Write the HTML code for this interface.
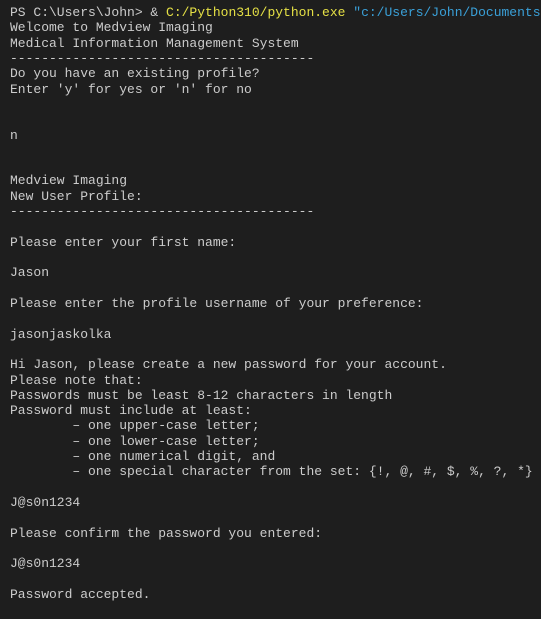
<!DOCTYPE html>
<html><head><meta charset="utf-8"><style>
html,body{margin:0;padding:0;background:#1e1e1e;width:541px;height:619px;overflow:hidden}
pre{margin:0;position:absolute;left:10px;top:5px;font-family:"Liberation Mono","DejaVu Sans Mono",monospace;font-size:13px;line-height:15.32px;color:#cccccc;white-space:pre}
.y{color:#e5e045}.b{color:#3aa0d8}
</style></head><body><pre>PS C:\Users\John&gt; &amp; <span class="y">C:/Python310/python.exe</span> <span class="b">"c:/Users/John/Documents/</span>
Welcome to Medview Imaging
Medical Information Management System
---------------------------------------
Do you have an existing profile?
Enter 'y' for yes or 'n' for no


n


Medview Imaging
New User Profile:
---------------------------------------

Please enter your first name:

Jason

Please enter the profile username of your preference:

jasonjaskolka

Hi Jason, please create a new password for your account.
Please note that:
Passwords must be least 8-12 characters in length
Password must include at least:
        – one upper-case letter;
        – one lower-case letter;
        – one numerical digit, and
        – one special character from the set: {!, @, #, $, %, ?, *}

J@s0n1234

Please confirm the password you entered:

J@s0n1234

Password accepted.</pre></body></html>
